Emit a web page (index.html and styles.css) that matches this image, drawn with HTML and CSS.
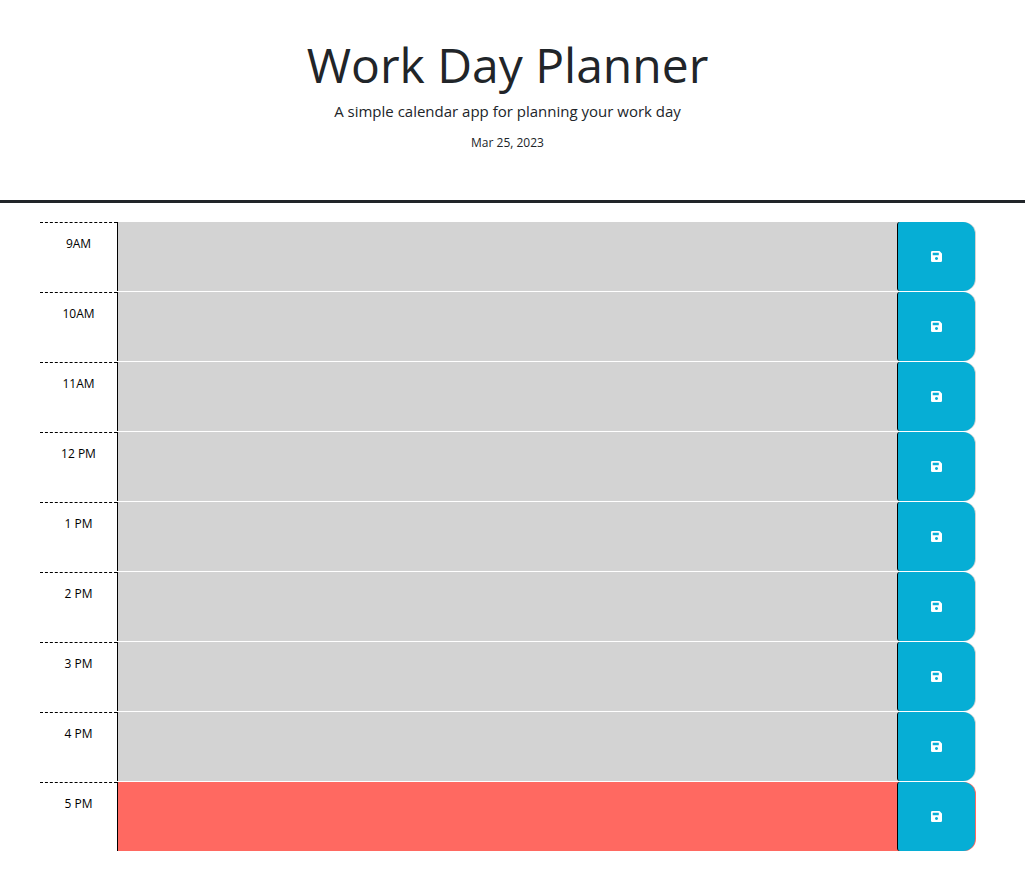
FILE: index.html
```html
<!DOCTYPE html>
<html lang="en">
<head>
<meta charset="utf-8">
<title>Work Day Planner</title>
<link rel="stylesheet" href="styles.css">
</head>
<body>
<header class="header">
<h1 class="title">Work Day Planner</h1>
<p class="lead">A simple calendar app for planning your work day</p>
<p class="date">Mar 25, 2023</p>
</header>
<main class="planner" id="planner"></main>
<script src="script.js"></script>
</body>
</html>
```
FILE: styles.css
```css
* { box-sizing: border-box; }
body { margin: 0; font-family: "Open Sans", sans-serif; font-size: 12px; line-height: 18px; color: #212529; background: #fff; }
.header { height: 203px; padding: 36px 17px 0 7px; border-bottom: 3px solid #212529; text-align: center; }
.title { margin: 0; font-size: 48px; line-height: 58px; font-weight: 400; }
.lead { margin: 6px 0 11px; font-size: 15px; line-height: 23px; }
.date { margin: 0; }
.planner { padding: 19px 49px 0 40px; }
.row { display: flex; height: 70px; }
.hour { width: 77px; padding-top: 12px; border-top: 1px dashed #000; text-align: center; color: #000; }
.slot { display: flex; flex: 1; height: 69px; padding-right: 1px; border-left: 1px solid #000; border-radius: 0 12px 12px 0; }
.past { background: #d3d3d3; }
.present { background: #ff6961; }
.text { flex: 1; }
.save { display: flex; align-items: center; justify-content: center; width: 78px; height: 69px; padding: 0 0 1px; border: 0; border-left: 1px solid #000; border-radius: 3px 12px 12px 3px; background: #06aed5; color: #fff; }
.icon { width: 11px; height: 11px; fill: #fff; }
```
FILE: script.js
```js
const hours = ["9AM", "10AM", "11AM", "12 PM", "1 PM", "2 PM", "3 PM", "4 PM", "5 PM"];
document.getElementById("planner").innerHTML = hours.map((hour, i) => `
<div class="row"><div class="hour">${hour}</div>
<div class="slot ${i === 8 ? "present" : "past"}"><div class="text"></div>
<button class="save" aria-label="Save"><svg class="icon" viewBox="0 0 11 11"><path fill-rule="evenodd" d="M1.3 0h6.8q.4 0 .7.3l1.9 1.9q.3.3.3.7v6.8q0 1.3-1.3 1.3H1.3Q0 11 0 9.700V1.300Q0 0 1.300 0zM2 1.800q-.3 0-.3.3v1.800q0 .3.3.3h5.500q.3 0 .3-.3V2.100q0-.3-.3-.3zM5.500 6.100a1.500 1.500 0 1 0 .01 0z"/></svg></button></div></div>`).join("");
```
